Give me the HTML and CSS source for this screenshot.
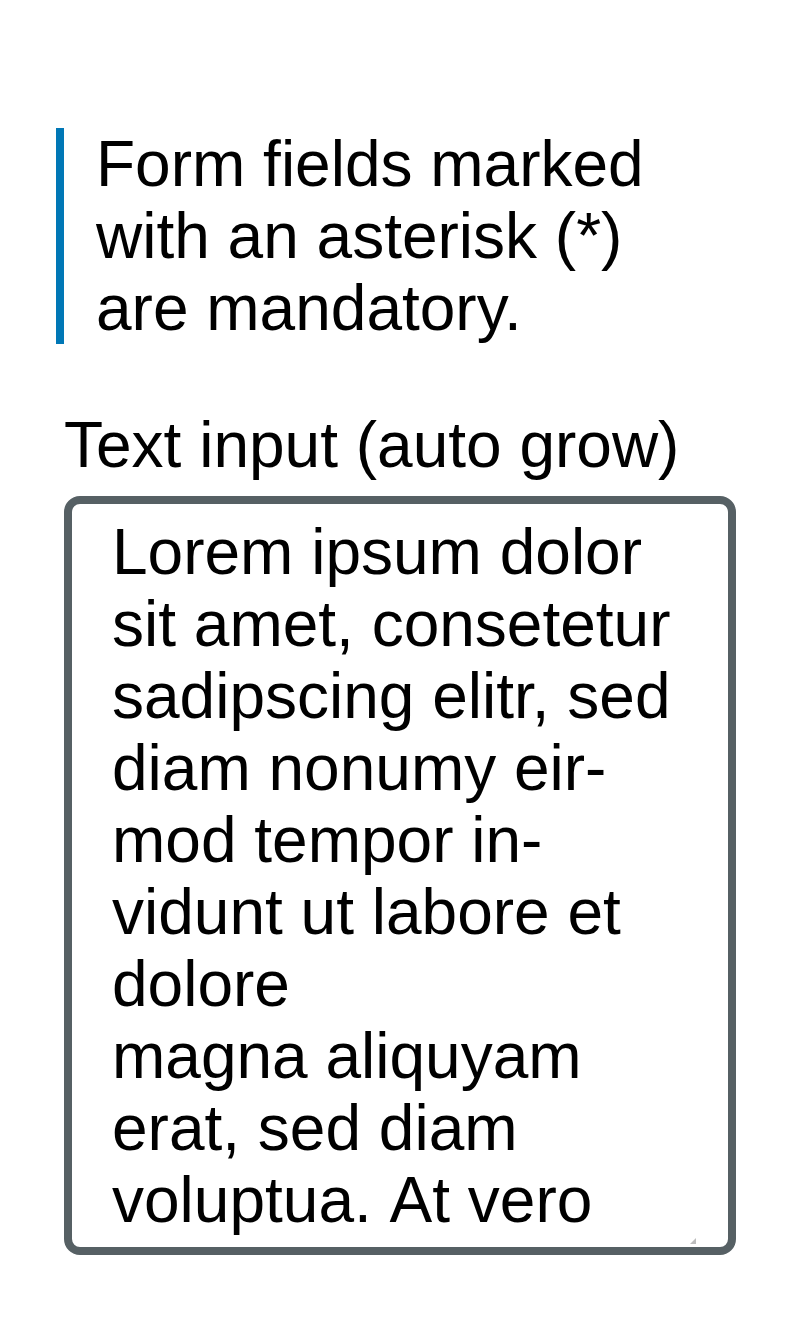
FILE: index.html
```html
<!DOCTYPE html>
<html lang="en">
<head>
<meta charset="utf-8">
<title>Form</title>
<link rel="stylesheet" href="styles.css">
</head>
<body>
<main class="page">
  <p class="note">Form fields marked with an asterisk (*) are mandatory.</p>
  <div class="field">
    <label class="field-label" for="autogrow">Text input (auto grow)</label>
    <div class="field-control">
      <textarea class="field-input" id="autogrow">Lorem ipsum dolor sit amet, consetetur sadipscing elitr, sed diam nonumy eir&shy;mod tempor in&shy;vidunt ut labore et dolore
magna aliquyam erat, sed diam voluptua. &#8204;At vero</textarea>
    </div>
  </div>
</main>
</body>
</html>
```

FILE: styles.css
```css
html, body {
  margin: 0;
  padding: 0;
  background: #ffffff;
}

body {
  font-family: "Liberation Sans", Arial, sans-serif;
  font-size: 64px;
  line-height: 72px;
  color: #000000;
}

.page {
  padding: 128px 64px 0 56px;
}

.note {
  margin: 0;
  padding: 0 32px 0 32px;
  border-left: 8px solid #0077b6;
}

.field {
  margin: 65px 0 0 8px;
  display: flex;
  flex-direction: column;
  gap: 15px;
}

.field-label {
  display: block;
}

.field-control {
  position: relative;
  display: flex;
}

.field-control::after {
  content: "";
  position: absolute;
  right: 40px;
  bottom: 11px;
  width: 0;
  height: 0;
  border-left: 6px solid transparent;
  border-bottom: 6px solid #bdbdbd;
  pointer-events: none;
}

.field-input {
  box-sizing: border-box;
  display: block;
  width: 100%;
  height: 759px;
  margin: 0;
  padding: 12px 40px;
  border: 8px solid #566064;
  border-radius: 16px;
  font-family: inherit;
  font-size: 64px;
  line-height: 72px;
  color: #000000;
  background: #ffffff;
  overflow: hidden;
  resize: none;
  outline: none;
}
```
